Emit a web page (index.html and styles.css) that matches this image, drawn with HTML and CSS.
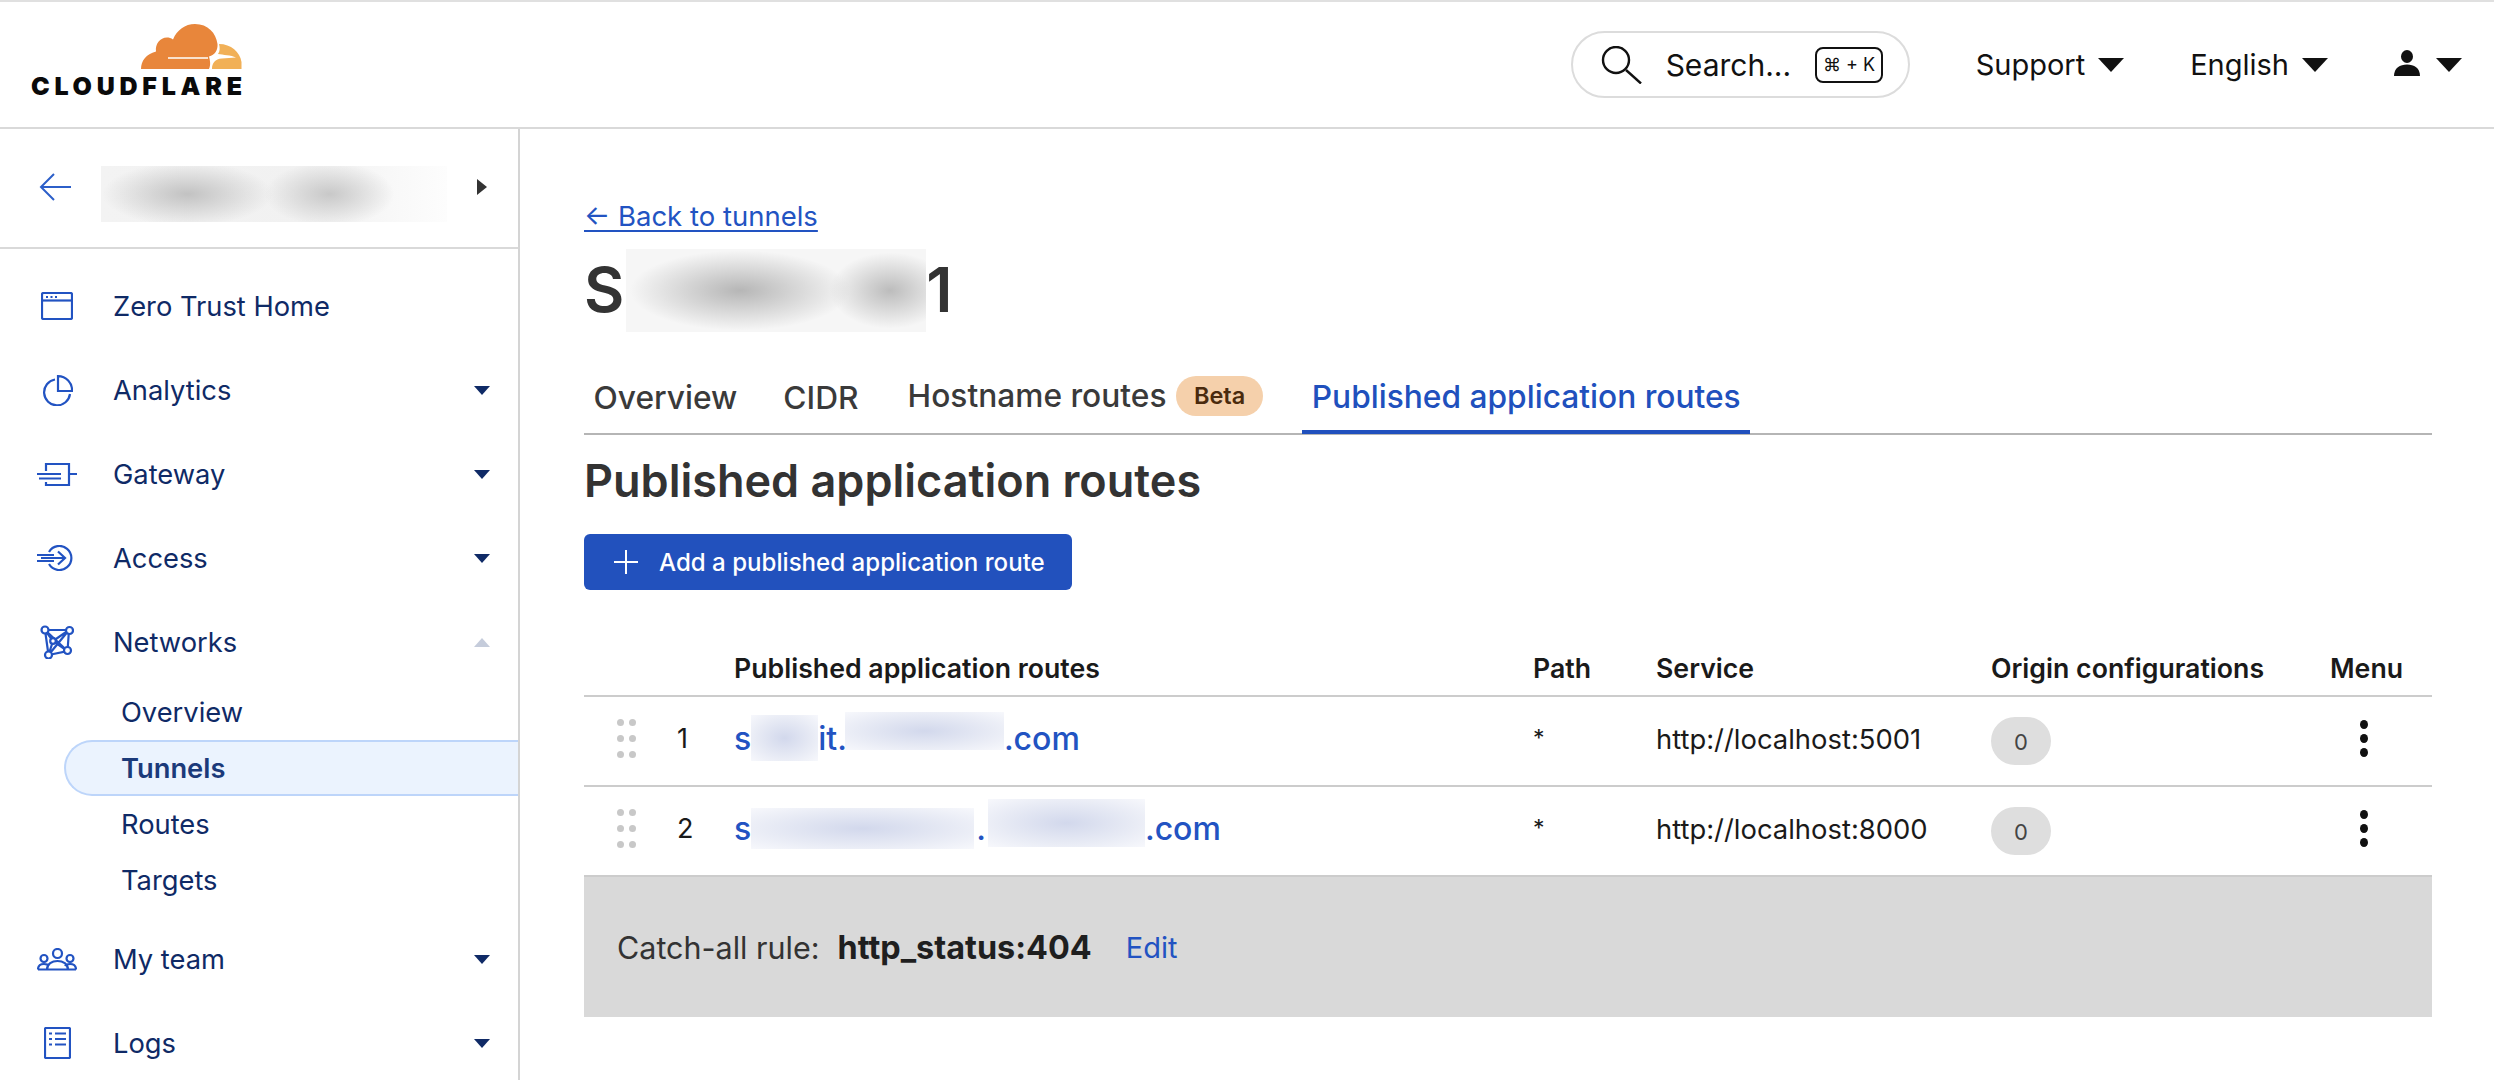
FILE: index.html
```html
<!DOCTYPE html>
<html lang="en">
<head>
<meta charset="utf-8">
<title>Published application routes</title>
<link rel="stylesheet" href="styles.css">
</head>
<body>
<header class="topbar">
  <a class="logo">
    <svg class="logo-cloud" viewBox="0 0 101 45" width="101" height="45">
      <path fill="#e8863b" d="M0 45C0 37 5 30 15 27.5C14 20 19 13.5 26 13.5C28 13.5 30 14 32 15.5C36 6 44 0 54 0C67 0 75 9 76.5 20C77 26 74 31 68 32.5C69 36 70 41 68 45Z"/>
      <path fill="none" stroke="#fff" stroke-width="1.6" d="M27 34H67"/>
      <path fill="#f1b057" d="M78 20C90 20 99 28 100.500 38V45H71C71 39 74 35 81 34.500L95 33.500C90 31 82 31 77 30C79 27 79 24 78 20Z"/>
    </svg>
    <span class="logo-text">CLOUDFLARE</span>
  </a>
  <div class="top-actions">
    <div class="search">
      <svg class="search-icon" viewBox="0 0 41 38" width="41" height="38"><circle cx="15" cy="14" r="13" fill="none" stroke="#111" stroke-width="2.4"/><path d="M25 24L40 37.500" fill="none" stroke="#111" stroke-width="2.4"/></svg>
      <span class="search-text">Search...</span>
      <kbd class="kbd">⌘ + K</kbd>
    </div>
    <span class="top-link">Support<i class="top-caret"></i></span>
    <span class="top-link">English<i class="top-caret"></i></span>
    <span class="top-user">
      <svg viewBox="0 0 26 26" width="26" height="26"><ellipse cx="13" cy="6.500" rx="6" ry="6.500" fill="#111"/><path d="M0 26C0 18 6 14.500 13 14.500C20 14.500 26 18 26 26Z" fill="#111"/></svg>
      <i class="top-caret"></i>
    </span>
  </div>
</header>
<div class="shell">
  <aside class="sidebar">
    <div class="org">
      <svg class="org-back" viewBox="0 0 32 28" width="32" height="28"><path d="M15 1L2 14L15 27M2 14H32" fill="none" stroke="#2c5fc9" stroke-width="2"/></svg>
      <span class="blur blur-org"></span>
      <i class="org-caret"></i>
    </div>
    <nav class="nav">
      <a class="nav-item">
        <span class="nav-icon"><svg viewBox="0 0 32 28" width="32" height="28"><rect x="1" y="1" width="30" height="26" rx="1.500" fill="none"/><path d="M1 8.500H31" fill="none"/><path class="dots" d="M5 5H7M9.500 5H11.500M14 5H16" fill="none"/></svg></span>
        <span>Zero Trust Home</span>
      </a>
      <a class="nav-item">
        <span class="nav-icon"><svg viewBox="0 0 31 31" width="31" height="31"><path d="M13 4.500A13 13 0 1 0 28 19" fill="none"/><path d="M16 1.200A14 14 0 0 1 30 16H16Z" fill="none"/></svg></span>
        <span>Analytics</span><i class="caret"></i>
      </a>
      <a class="nav-item">
        <span class="nav-icon"><svg viewBox="0 0 40 23" width="40" height="23"><path d="M9 8V1H32V22H9V19M32 11H40M0 11H24M2 15.500H24" fill="none"/></svg></span>
        <span>Gateway</span><i class="caret"></i>
      </a>
      <a class="nav-item">
        <span class="nav-icon"><svg viewBox="0 0 40 26" width="40" height="26"><path d="M12 7A12 12 0 1 1 12 19M0 10H17M0 16H17M4 13H28M21 6.500L28 13L21 19.500" fill="none"/></svg></span>
        <span>Access</span><i class="caret"></i>
      </a>
      <a class="nav-item">
        <span class="nav-icon"><svg viewBox="0 0 34 34" width="34" height="34"><path d="M5 5H29L27.500 26L8.500 30ZM5 5L27.500 26M29 5L8.500 30M5 5L13 16L8.500 30M29 5L13 16L27.500 26" fill="none"/><circle cx="5" cy="5" r="3.500" fill="#fff"/><circle cx="29.500" cy="5.500" r="3.500" fill="#fff"/><circle cx="8.500" cy="30" r="3.500" fill="#fff"/><circle cx="27.500" cy="25.500" r="3.500" fill="#fff"/><circle cx="13" cy="16" r="2.800" fill="#fff"/></svg></span>
        <span>Networks</span><i class="caret caret-up"></i>
      </a>
      <a class="sub-item">Overview</a>
      <a class="sub-item sub-active">Tunnels</a>
      <a class="sub-item">Routes</a>
      <a class="sub-item">Targets</a>
      <a class="nav-item nav-after">
        <span class="nav-icon"><svg viewBox="0 0 40 23" width="40" height="23"><circle cx="20.500" cy="5.500" r="4.500" fill="none"/><circle cx="7" cy="10.500" r="3.500" fill="none"/><circle cx="33" cy="10.500" r="3.500" fill="none"/><path d="M1 21.500H39M1 21.500C1 17.500 4 16 7 16C9 16 11 16.500 12 18M39 21.500C39 17.500 36 16 33 16C31 16 29 16.500 28 18M10 21.500C10 16 15 13 20.500 13C26 13 31 16 31 21.500" fill="none"/></svg></span>
        <span>My team</span><i class="caret"></i>
      </a>
      <a class="nav-item">
        <span class="nav-icon"><svg viewBox="0 0 27 32" width="27" height="32"><rect x="1" y="1" width="25" height="30" rx="1" fill="none"/><path d="M5 6.500H8M11 6.500H22M5 12H8M11 12H22M5 17.500H8M11 17.500H22" fill="none"/></svg></span>
        <span>Logs</span><i class="caret"></i>
      </a>
    </nav>
  </aside>
  <main class="main">
    <a class="back-link">← Back to tunnels</a>
    <h1 class="title"><span>S</span><span class="blur blur-title"></span><span>1</span></h1>
    <div class="tabs">
      <a class="tab tab-first">Overview</a>
      <a class="tab">CIDR</a>
      <a class="tab tab-high">Hostname routes<span class="beta">Beta</span></a>
      <a class="tab tab-active">Published application routes</a>
    </div>
    <h2 class="heading">Published application routes</h2>
    <button class="add-btn"><svg viewBox="0 0 24 24" width="24" height="24"><path d="M12 0V24M0 12H24" fill="none" stroke="#fff" stroke-width="2"/></svg>Add a published application route</button>
    <table class="routes">
      <colgroup><col class="c-grip"><col class="c-num"><col class="c-route"><col class="c-path"><col class="c-service"><col class="c-origin"><col class="c-menu"></colgroup>
      <thead>
        <tr><th></th><th></th><th>Published application routes</th><th>Path</th><th>Service</th><th>Origin configurations</th><th>Menu</th></tr>
      </thead>
      <tbody>
        <tr>
          <td class="grip-cell"><span class="grip"><i></i><i></i><i></i><i></i><i></i><i></i></span></td>
          <td class="num">1</td>
          <td><a class="route">s<span class="blur blur-link b1"></span>it.<span class="blur blur-link b2"></span>.com</a></td>
          <td class="txt star">*</td>
          <td class="txt">http://localhost:5001</td>
          <td><span class="count">0</span></td>
          <td><span class="kebab"><i></i><i></i><i></i></span></td>
        </tr>
        <tr>
          <td class="grip-cell"><span class="grip"><i></i><i></i><i></i><i></i><i></i><i></i></span></td>
          <td class="num">2</td>
          <td><a class="route">s<span class="blur blur-link b3"></span><span class="dot">.</span><span class="blur blur-link b4"></span>.com</a></td>
          <td class="txt star">*</td>
          <td class="txt">http://localhost:8000</td>
          <td><span class="count">0</span></td>
          <td><span class="kebab"><i></i><i></i><i></i></span></td>
        </tr>
      </tbody>
    </table>
    <div class="catch">
      <span>Catch-all rule:</span><strong class="catch-value">http_status:404</strong><a class="catch-edit">Edit</a>
    </div>
  </main>
</div>
</body>
</html>
```
FILE: styles.css
```css
* { box-sizing: border-box; }
html, body { margin: 0; height: 1080px; overflow: hidden; background: #fff; }
body { font-family: Inter, "DejaVu Sans", sans-serif; color: #333; }
a { color: inherit; text-decoration: none; }
i { display: block; }

.topbar {
  display: flex;
  align-items: center;
  justify-content: space-between;
  height: 129px;
  border-top: 2px solid #e0e0e0;
  border-bottom: 2px solid #d9d9d9;
  padding: 0 32px;
  color: #111;
}
.logo { display: flex; flex-direction: column; align-items: flex-end; width: 210px; margin-top: -11px; }
.logo-cloud { display: block; }
.logo-text {
  font-size: 25px;
  font-weight: 900;
  line-height: 18px;
  letter-spacing: 4.750px;
  margin-top: 8px;
  margin-right: -4.750px;
  color: #0a0a0a;
}
.top-actions { display: flex; align-items: center; }
.search {
  display: flex;
  align-items: center;
  width: 339px;
  height: 67px;
  margin-right: 66px;
  padding-left: 28px;
  border: 2px solid #dcdcdc;
  border-radius: 34px;
}
.search-text { font-size: 30px; margin-left: 24px; }
.kbd {
  display: flex;
  align-items: center;
  justify-content: center;
  width: 68px;
  height: 36px;
  margin-left: 24px;
  border: 2px solid #111;
  border-radius: 8px;
  font-family: Inter, "DejaVu Sans", sans-serif;
  font-size: 18px;
}
.top-link { display: flex; align-items: center; font-size: 29px; margin-right: 66px; }
.top-user { display: flex; align-items: center; gap: 3px; }
.top-user svg { margin-top: -4px; }
.top-caret {
  width: 0;
  height: 0;
  margin-left: 13px;
  border-left: 13px solid transparent;
  border-right: 13px solid transparent;
  border-top: 14px solid #111;
}

.shell { display: flex; height: 951px; }
.sidebar { flex: 0 0 520px; border-right: 2px solid #d4d4d4; color: #0f2a66; }
.org {
  display: flex;
  align-items: center;
  height: 120px;
  padding: 0 0 2px 39px;
  border-bottom: 2px solid #d9d9d9;
}
.org-back { flex: none; }
.blur-org {
  width: 346px;
  height: 56px;
  margin: 14px 0 0 30px;
  background:
    radial-gradient(ellipse 85px 32px at 25% 50%, #c2c2c2, transparent),
    radial-gradient(ellipse 65px 32px at 66% 50%, #c8c8c8, transparent),
    linear-gradient(90deg, #f3f3f3, #f1f1f1 60%, #fdfdfd);
}
.org-caret {
  width: 0;
  height: 0;
  margin-left: 30px;
  border-top: 8.500px solid transparent;
  border-bottom: 8.500px solid transparent;
  border-left: 10px solid #333;
}
.nav { padding-top: 15px; }
.nav-item {
  display: flex;
  align-items: center;
  height: 84px;
  padding: 0 28px 0 37px;
  font-size: 27.300px;
}
.nav-after { margin-top: 9px; }
.nav-icon { display: flex; justify-content: center; flex: 0 0 40px; margin-right: 36px; }
.nav-icon svg { display: block; stroke: #2253c2; stroke-width: 2.200; }
.nav-icon .dots { stroke-width: 2; }
.caret {
  width: 0;
  height: 0;
  margin-left: auto;
  border-left: 8px solid transparent;
  border-right: 8px solid transparent;
  border-top: 9px solid #0f2a66;
}
.caret-up { border-top: 0; border-bottom: 9px solid #c5ccdb; }
.sub-item {
  display: flex;
  align-items: center;
  height: 56px;
  padding-left: 121px;
  font-size: 27.300px;
}
.sub-active {
  margin-left: 64px;
  padding-left: 55px;
  background: #ebf3fe;
  border: 2px solid #bdd5fa;
  border-right: 0;
  border-radius: 28px 0 0 28px;
  font-weight: 600;
  color: #1b3a7a;
}

.main { flex: 1; padding: 70px 62px 0 64px; min-width: 0; }
.back-link {
  display: block;
  width: max-content;
  font-size: 27.500px;
  line-height: 34px;
  color: #2253c2;
  text-decoration: underline;
  text-underline-offset: 4px;
  text-decoration-thickness: 2px;
}
.title {
  display: flex;
  align-items: center;
  margin: 15px 0 0;
  font-size: 62px;
  font-weight: 600;
  line-height: 84px;
  color: #333;
}
.blur { display: block; flex: none; }
.blur-title {
  width: 300px;
  height: 83px;
  margin-left: 2px;
  background:
    radial-gradient(ellipse 110px 40px at 38% 50%, #b6b6b6, transparent),
    radial-gradient(ellipse 60px 38px at 88% 50%, #bcbcbc, transparent),
    #f6f6f6;
}
.tabs {
  display: flex;
  gap: 30px;
  height: 57px;
  margin-top: 46px;
  border-bottom: 2px solid #b5b5b5;
}
.tab {
  position: relative;
  display: flex;
  align-items: center;
  padding: 0 9.500px 15px;
  font-size: 31.700px;
  font-weight: 500;
  line-height: 40px;
  color: #3a3a3a;
}
.tab-first { margin-right: -3px; }
.tab-high { padding-bottom: 19px; }
.beta {
  display: flex;
  align-items: center;
  height: 40px;
  margin-left: 10px;
  padding: 0 17.500px;
  border-radius: 20px;
  background: #f5d0ab;
  color: #4a2a0d;
  font-size: 23.500px;
  font-weight: 600;
}
.tab-active { color: #2050bd; padding-bottom: 17px; }
.tab-active::after {
  content: "";
  position: absolute;
  left: 0;
  right: 0;
  bottom: -1px;
  height: 4px;
  background: #2050bd;
}
.heading {
  margin: 18px 0 0;
  font-size: 45px;
  font-weight: 600;
  line-height: 56px;
  color: #333;
}
.add-btn {
  display: flex;
  align-items: center;
  gap: 21px;
  width: 488px;
  height: 56px;
  margin-top: 25px;
  padding: 0 0 0 30px;
  border: 0;
  border-radius: 6px;
  background: #2251bd;
  color: #fff;
  font-family: inherit;
  font-size: 24.100px;
  font-weight: 500;
}
.routes {
  width: 1848px;
  margin-top: 50px;
  table-layout: fixed;
  border-collapse: separate;
  border-spacing: 0;
  color: #1a1a1a;
}
.c-grip { width: 84px; }
.c-num { width: 66px; }
.c-route { width: 799px; }
.c-path { width: 123px; }
.c-service { width: 335px; }
.c-origin { width: 339px; }
.c-menu { width: 102px; }
.routes th {
  height: 57px;
  padding: 0;
  text-align: left;
  font-size: 26.700px;
  font-weight: 600;
  border-bottom: 2px solid #ccc;
}
.routes td {
  height: 90px;
  padding: 0;
  border-bottom: 2px solid #ccc;
}
.grip-cell { padding-left: 33px !important; }
.grip { display: grid; grid-template-columns: 7px 7px; gap: 9px 5px; width: 19px; margin-bottom: 6px; }
.grip i { width: 7px; height: 7px; border-radius: 50%; background: #c8c8c8; }
.routes .num { padding: 0 0 6px 9px; font-size: 27px; }
.route {
  display: flex;
  align-items: center;
  height: 40px;
  margin-bottom: 6px;
  color: #2253c2;
  font-size: 32px;
  font-weight: 500;
}
.blur-link { background: radial-gradient(ellipse at 50% 50%, #d2d8ec, #e8ebf5 60%, #f7f8fc); }
.b1 { width: 67px; height: 46px; }
.b2 { width: 159px; height: 38px; margin: 0 0 14px -2px; }
.b3 { width: 223px; height: 41px; }
.b4 { width: 157px; height: 48px; margin: 0 0 10px 2px; }
.dot { margin-left: 2px; }
.routes .txt { padding-bottom: 4px; font-size: 27.400px; }
.routes .star { padding-bottom: 6px; font-size: 23px; }
.count {
  display: flex;
  align-items: center;
  justify-content: center;
  width: 60px;
  height: 48px;
  padding-top: 2px;
  border-radius: 24px;
  background: #dedede;
  color: #444;
  font-size: 22px;
}
.kebab { display: flex; flex-direction: column; gap: 5px; margin: 0 0 6px 30px; }
.kebab i { width: 8px; height: 9px; border-radius: 50%; background: #111; }
.catch {
  display: flex;
  align-items: center;
  height: 140px;
  padding-left: 33px;
  background: #d9d9d9;
  font-size: 30.500px;
  color: #333;
}
.catch-value { margin-left: 18px; font-size: 32.400px; font-weight: 700; color: #1f1f1f; }
.catch-edit { margin-left: 34px; font-size: 29px; color: #2253c2; }
```
